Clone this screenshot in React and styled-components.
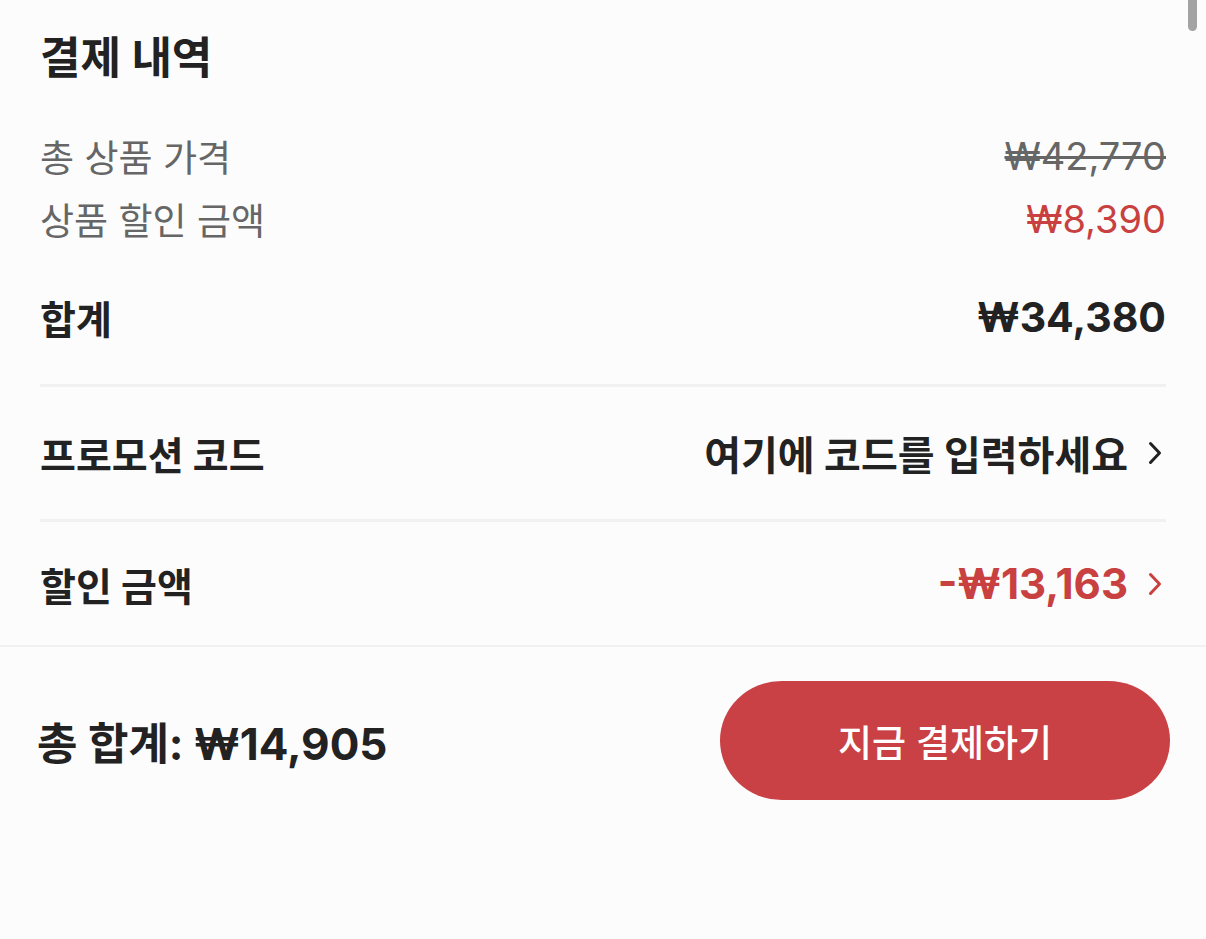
import React from "react";
import styled, { createGlobalStyle, css } from "styled-components";

const GlobalStyle = createGlobalStyle`
  html, body {
    margin: 0;
    padding: 0;
    background: #fcfcfc;
  }
  body {
    font-family: "Inter", "Noto Sans CJK KR", sans-serif;
    color: #222222;
    -webkit-font-smoothing: antialiased;
  }
`;

const RED = "#c8403f";

const Page = styled.div`
  position: relative;
  width: 1206px;
  height: 939px;
  background: #fcfcfc;
  overflow: hidden;
`;

const ScrollThumb = styled.div`
  position: absolute;
  top: -10px;
  right: 9px;
  width: 9px;
  height: 41px;
  border-radius: 5px;
  background: #a3a3a3;
`;

const Content = styled.section`
  display: flex;
  flex-direction: column;
  padding: 0 40px;
`;

const Title = styled.h1`
  display: flex;
  align-items: center;
  height: 110px;
  margin: 0;
  font-size: 44px;
  font-weight: 700;
  color: #222;
`;

const SummaryList = styled.div`
  display: flex;
  flex-direction: column;
  margin-top: 14px;
`;

const Row = styled.div`
  display: flex;
  align-items: center;
  justify-content: space-between;
  height: ${(p) => p.$h}px;
`;

const SubLabel = styled.span`
  font-size: 37px;
  font-weight: 400;
  color: #666;
`;

const Price = styled.span`
  font-size: 38px;
  font-weight: 400;
  color: ${(p) => (p.$tone === "red" ? RED : "#666")};
  ${(p) =>
    p.$strike &&
    css`
      text-decoration: line-through;
      text-decoration-thickness: 3px;
    `}
`;

const BoldLabel = styled.span`
  font-size: 39px;
  font-weight: 700;
  color: #222;
`;

const BoldValue = styled.span`
  font-size: ${(p) => (p.$tone === "red" ? 42 : 41)}px;
  font-weight: 700;
  color: ${(p) => (p.$tone === "red" ? RED : "#222")};
`;

const Divider = styled.div`
  height: 3px;
  background: #f1f1f1;
`;

const Trailing = styled.div`
  display: flex;
  align-items: center;
  gap: 20px;
  padding-right: 4px;
`;

const LinkText = styled.span`
  font-size: 40px;
  font-weight: 700;
  color: #222;
`;

const Footer = styled.footer`
  display: flex;
  align-items: center;
  justify-content: space-between;
  border-top: 2px solid #f1f1f1;
  padding: 34px 36px 0 37px;
`;

const GrandTotal = styled.div`
  font-size: 44px;
  font-weight: 700;
  color: #222;
`;

const PayButton = styled.button`
  width: 450px;
  height: 119px;
  border: none;
  border-radius: 62px / 60px;
  background: #c94145;
  color: #fff;
  font-family: inherit;
  font-size: 37px;
  font-weight: 500;
  cursor: pointer;
`;

const Chevron = ({ color }) => (
  <svg width="14" height="24" viewBox="0 0 14 24" fill="none">
    <polyline
      points="2.5,2.5 11.5,12 2.5,21.5"
      stroke={color}
      strokeWidth="3"
      strokeLinecap="round"
      strokeLinejoin="round"
    />
  </svg>
);

export default function App() {
  return (
    <Page>
      <GlobalStyle />
      <ScrollThumb />
      <Content>
        <Title>결제 내역</Title>
        <SummaryList>
          <Row $h={63}>
            <SubLabel>총 상품 가격</SubLabel>
            <Price $strike>₩42,770</Price>
          </Row>
          <Row $h={63}>
            <SubLabel>상품 할인 금액</SubLabel>
            <Price $tone="red">₩8,390</Price>
          </Row>
        </SummaryList>
        <Row $h={134}>
          <BoldLabel>합계</BoldLabel>
          <BoldValue>₩34,380</BoldValue>
        </Row>
        <Divider />
        <Row $h={132}>
          <BoldLabel>프로모션 코드</BoldLabel>
          <Trailing>
            <LinkText>여기에 코드를 입력하세요</LinkText>
            <Chevron color="#222" />
          </Trailing>
        </Row>
        <Divider />
        <Row $h={123}>
          <BoldLabel>할인 금액</BoldLabel>
          <Trailing>
            <BoldValue $tone="red">-₩13,163</BoldValue>
            <Chevron color={RED} />
          </Trailing>
        </Row>
      </Content>
      <Footer>
        <GrandTotal>총 합계: ₩14,905</GrandTotal>
        <PayButton>지금 결제하기</PayButton>
      </Footer>
    </Page>
  );
}
